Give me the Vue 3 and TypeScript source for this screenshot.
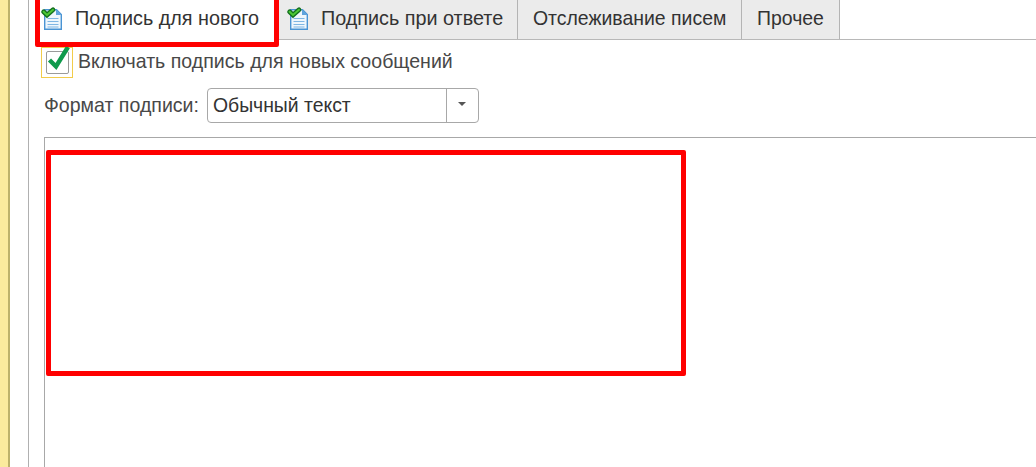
<script setup lang="ts">
const tabs: { label: string; icon: boolean; width: number }[] = [
  { label: 'Подпись при ответе', icon: true, width: 240 },
  { label: 'Отслеживание писем', icon: false, width: 224 },
  { label: 'Прочее', icon: false, width: 98 },
]
</script>

<template>
  <div class="page">
    <div class="strip"></div>
    <div class="panel">
      <div class="tabbar">
        <div class="tab active">
          <svg class="doc" viewBox="0 0 24 24" width="24" height="24">
            <path d="M3.7 2.7H15.5L20.3 7.5V22.3H3.7Z" fill="#eef6fc" stroke="#4a94d4" stroke-width="1.4" />
            <path d="M15 2.5V8H20.5Z" fill="#5fa3dc" />
            <path d="M6.5 11.5H17.5M6.5 14.5H17.5M6.5 17.5H17.5M6.5 20H17.5" stroke="#7fb6e3" stroke-width="1.2" />
            <path d="M2.6 4.8L6 8L12 2.8" fill="none" stroke="#14701f" stroke-width="4.8" stroke-linecap="round" />
            <path d="M2.6 4.8L6 8L12 2.8" fill="none" stroke="#4cc834" stroke-width="2" stroke-linecap="round" />
          </svg>
          <span class="t-wide">Подпись для нового</span>
        </div>
        <div
          v-for="t in tabs"
          :key="t.label"
          class="tab"
          :class="{ plain: !t.icon }"
          :style="{ width: t.width + 'px' }"
        >
          <svg v-if="t.icon" class="doc" viewBox="0 0 24 24" width="24" height="24">
            <path d="M3.7 2.7H15.5L20.3 7.5V22.3H3.7Z" fill="#eef6fc" stroke="#4a94d4" stroke-width="1.4" />
            <path d="M15 2.5V8H20.5Z" fill="#5fa3dc" />
            <path d="M6.5 11.5H17.5M6.5 14.5H17.5M6.5 17.5H17.5M6.5 20H17.5" stroke="#7fb6e3" stroke-width="1.2" />
            <path d="M2.6 4.8L6 8L12 2.8" fill="none" stroke="#14701f" stroke-width="4.8" stroke-linecap="round" />
            <path d="M2.6 4.8L6 8L12 2.8" fill="none" stroke="#4cc834" stroke-width="2" stroke-linecap="round" />
          </svg>
          <span :class="{ 't-wide': t.icon }">{{ t.label }}</span>
        </div>
      </div>

      <div class="content">
        <div class="check-row">
          <div class="focus">
            <div class="box">
              <svg class="tick" viewBox="0 0 24 28" width="24" height="28">
                <path d="M3.5 15L10 21.5L22 2" fill="none" stroke="#0f9a4c" stroke-width="4.4" />
              </svg>
            </div>
          </div>
          <span class="check-label">Включать подпись для новых сообщений</span>
        </div>

        <div class="format-row">
          <span>Формат подписи:</span>
          <div class="combo">
            <div class="value">Обычный текст</div>
            <div class="arrow"><i></i></div>
          </div>
        </div>

        <div class="editor"></div>
      </div>

      <div class="mark mark-tab"></div>
      <div class="mark mark-editor"></div>
    </div>
  </div>
</template>

<style>
html, body { margin: 0; background: #fff; overflow: hidden; }
</style>

<style scoped>
.page {
  display: flex;
  width: 1036px;
  height: 467px;
  overflow: hidden;
  background: #fff;
  font-family: "Liberation Sans", Arial, sans-serif;
  font-size: 19.56px;
  color: #484848;
}
.strip {
  width: 8px;
  flex: none;
  background: #fbeb9d;
  border-right: 2px solid #bdb26a;
}
.panel {
  position: relative;
  flex: 1;
  margin-left: 18px;
  border-left: 1px solid #b0b0b0;
}
.tabbar {
  display: flex;
  height: 39px;
  border-bottom: 1px solid #b8b8b8;
}
.tab {
  box-sizing: border-box;
  display: flex;
  align-items: center;
  height: 39px;
  padding-bottom: 2px;
  background: #ebebeb;
  border-right: 1px solid #b4b4b4;
  color: #333;
  padding-left: 9px;
  gap: 10px;
  font-size: 19.45px;
  white-space: nowrap;
}
.t-wide { font-size: 19.8px; }
.tab.plain { padding-left: 15px; }
.tab.active {
  width: 249px;
  height: 40px;
  padding-bottom: 3px;
  background: #fff;
  border-right: none;
  padding-left: 12px;
}
.doc { flex: none; align-self: flex-start; margin-top: 7px; overflow: visible; }
.content {
  padding: 7px 0 0 15px;
}
.check-row {
  display: flex;
  align-items: center;
  height: 31px;
  margin-left: -3px;
  gap: 5px;
  white-space: nowrap;
}
.check-label { margin-bottom: 2px; letter-spacing: 0.01px; }
.focus {
  box-sizing: border-box;
  flex: none;
  width: 32px;
  height: 31px;
  border: 1px solid #f2cc4a;
  display: flex;
  align-items: center;
  justify-content: center;
}
.box {
  position: relative;
  box-sizing: border-box;
  width: 23px;
  height: 23px;
  border: 1px solid #9a9a9a;
  border-radius: 2px;
  background: #fff;
}
.tick { position: absolute; left: -1px; top: -7px; overflow: visible; }
.format-row {
  display: flex;
  align-items: center;
  height: 35px;
  margin-top: 10px;
  gap: 8px;
  white-space: nowrap;
}
.combo {
  box-sizing: border-box;
  display: flex;
  width: 272px;
  height: 35px;
  border: 1px solid #a8a8a8;
  border-radius: 4px;
  background: #fff;
}
.value {
  flex: 1;
  padding-left: 5px;
  line-height: 33px;
  font-size: 19.4px;
  color: #333;
}
.arrow {
  width: 31px;
  border-left: 1px solid #a8a8a8;
  display: flex;
  align-items: center;
  justify-content: center;
}
.arrow i {
  width: 0;
  height: 0;
  margin-top: -4px;
  border-left: 4px solid transparent;
  border-right: 4px solid transparent;
  border-top: 4px solid #555;
}
.editor {
  box-sizing: border-box;
  margin-top: 14px;
  height: 340px;
  border: 1px solid #a8a8a8;
  border-right: none;
}
.mark {
  position: absolute;
  box-sizing: border-box;
  border: 5px solid #ff0000;
  border-radius: 2px;
}
.mark-tab {
  left: 6px;
  top: -10px;
  width: 244px;
  height: 57px;
}
.mark-editor {
  left: 17px;
  top: 150px;
  width: 640px;
  height: 226px;
}
</style>
